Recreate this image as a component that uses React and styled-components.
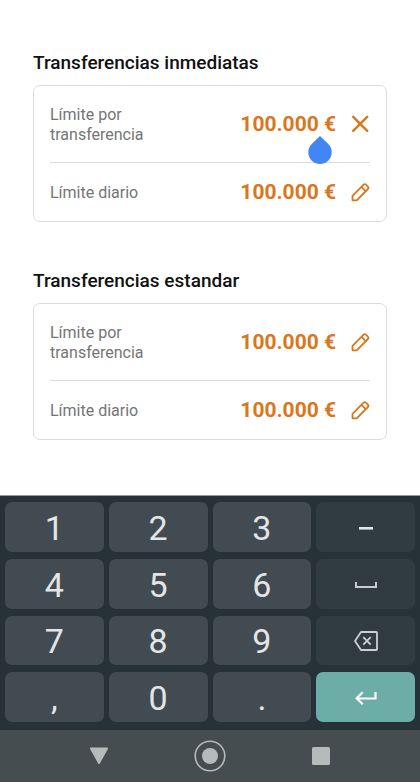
import React, { useState } from "react";
import styled, { createGlobalStyle } from "styled-components";

const sections = [
    {
        id: "inmediatas",
        title: "Transferencias inmediatas",
        limits: [
            { id: "inm-transferencia", label: "Límite por transferencia", value: "100.000 €", editing: true },
            { id: "inm-diario", label: "Límite diario", value: "100.000 €" },
        ],
    },
    {
        id: "estandar",
        title: "Transferencias estandar",
        limits: [
            { id: "est-transferencia", label: "Límite por transferencia", value: "100.000 €" },
            { id: "est-diario", label: "Límite diario", value: "100.000 €" },
        ],
    },
];

const CloseIcon = () => (
    <svg width="20" height="20" viewBox="0 0 20 20" fill="none" stroke="currentColor" strokeWidth="2.4" strokeLinecap="round">
        <path d="M3.2 2.8 17.2 16.8M17.2 2.8 3.2 16.8" />
    </svg>
);

const PencilIcon = () => (
    <svg width="20" height="20" viewBox="0 0 20 20" fill="none" stroke="currentColor" strokeWidth="1.8" strokeLinejoin="round">
        <path d="M2.500 18.300V13.900L13.600 2.700q1.200-1.100 2.400 0L17.900 4.600q1.100 1.200 0 2.400L6.700 18.300Z" />
        <path d="M11.400 4.900 15.700 9.200" />
    </svg>
);

const SpaceIcon = () => (
    <svg width="22" height="8" viewBox="0 0 22 8" fill="none" stroke="#c8cccd" strokeWidth="2">
        <path d="M1 1v5h20V1" />
    </svg>
);

const BackspaceIcon = () => (
    <svg width="24" height="20" viewBox="0 0 24 20" fill="none" stroke="#cdd0d1" strokeWidth="1.8" strokeLinejoin="round">
        <path d="M7 1h15.200q.8 0 .8.8v16.400q0 .8-.8.8H7L1 10Z" />
        <path d="m9.300 6.200 7.400 7.400M16.700 6.200l-7.400 7.400" />
    </svg>
);

const EnterIcon = () => (
    <svg width="22" height="14" viewBox="0 0 22 14" fill="none" stroke="#ffffff" strokeWidth="2.200">
        <path d="M20.500 1v6.500H2" />
        <path d="M7.700 1.200 1.700 7.300l6 5.900" />
    </svg>
);

const DashIcon = () => (
    <svg width="14" height="4" viewBox="0 0 14 4">
        <rect y="1" width="14" height="2.600" fill="#e3e5e6" />
    </svg>
);

const keys = [
    { name: "1" },
    { name: "2" },
    { name: "3" },
    { name: "Guion", icon: <DashIcon />, variant: "side" },
    { name: "4" },
    { name: "5" },
    { name: "6" },
    { name: "Espacio", icon: <SpaceIcon />, variant: "side" },
    { name: "7" },
    { name: "8" },
    { name: "9" },
    { name: "Borrar", icon: <BackspaceIcon />, variant: "side" },
    { name: "," },
    { name: "0" },
    { name: "." },
    { name: "Intro", icon: <EnterIcon />, variant: "enter" },
];

const LimitRow = ({ limit }) => {
    const [value, setValue] = useState(limit.value);

    return (
        <Row>
            <Label htmlFor={limit.id}>{limit.label}</Label>
            <Field>
                <Amount
                    id={limit.id}
                    value={value}
                    readOnly={!limit.editing}
                    inputMode="numeric"
                    onChange={(e) => setValue(e.target.value)}
                />
                {limit.editing ? (
                    <CaretHandle width="24" height="28" viewBox="0 0 24 28" aria-hidden="true">
                        <path d="M12 0 20.300 8.100A11.700 11.700 0 1 1 3.700 8.100Z" fill="#4285f4" />
                    </CaretHandle>
                ) : null}
            </Field>
            <IconButton type="button" aria-label={limit.editing ? "Cancelar" : "Editar"}>
                {limit.editing ? <CloseIcon /> : <PencilIcon />}
            </IconButton>
        </Row>
    );
};

const App = () => (
    <Screen>
        <GlobalStyle />
        <Content>
            {sections.map((section) => (
                <section key={section.id}>
                    <Title>{section.title}</Title>
                    <Card>
                        {section.limits.map((limit) => (
                            <LimitRow key={limit.id} limit={limit} />
                        ))}
                    </Card>
                </section>
            ))}
        </Content>
        <Keyboard>
            {keys.map((key) => (
                <Key key={key.name} type="button" $variant={key.variant} aria-label={key.icon ? key.name : undefined}>
                    {key.icon || key.name}
                </Key>
            ))}
        </Keyboard>
        <NavBar>
            <NavButton type="button" aria-label="Atrás">
                <svg width="20" height="18" viewBox="0 0 20 18">
                    <path d="M2 1.500h16L10 16Z" fill="#b5babb" stroke="#b5babb" strokeWidth="2" strokeLinejoin="round" />
                </svg>
            </NavButton>
            <NavButton type="button" aria-label="Inicio">
                <svg width="32" height="32" viewBox="0 0 32 32">
                    <circle cx="16" cy="16" r="14.800" fill="none" stroke="#b5babb" strokeWidth="1.600" />
                    <circle cx="16" cy="16" r="8" fill="#b5babb" />
                </svg>
            </NavButton>
            <NavButton type="button" aria-label="Recientes">
                <svg width="18" height="18" viewBox="0 0 18 18">
                    <rect width="18" height="18" rx="1.500" fill="#b5babb" />
                </svg>
            </NavButton>
        </NavBar>
    </Screen>
);

const GlobalStyle = createGlobalStyle`
    * {
        box-sizing: border-box;
    }
    body {
        margin: 0;
        background-color: #ffffff;
        font-family: Roboto, "Liberation Sans", sans-serif;
    }
    button, input {
        margin: 0;
        padding: 0;
        border: none;
        font-family: inherit;
    }
    svg {
        display: block;
    }
`;

const Screen = styled.div`
    display: flex;
    flex-direction: column;
    min-height: 100vh;
`;

const Content = styled.main`
    display: flex;
    flex-direction: column;
    flex: 1;
    gap: 47px;
    padding: 51px 33px 40px;
`;

const Title = styled.h2`
    margin: 0 0 10px;
    color: #111111;
    font-size: 19px;
    font-weight: 500;
    line-height: 24px;
`;

const Card = styled.div`
    padding: 0 16px;
    border: 1px solid #dcdcdc;
    border-radius: 7px;
`;

const Row = styled.div`
    display: flex;
    align-items: center;
    padding: 17px 0;
    & + & {
        border-top: 1px solid #d9d9d9;
    }
`;

const Label = styled.label`
    flex: 1;
    padding: 2px 60px 0 0;
    color: #757575;
    font-size: 16px;
    line-height: 20px;
`;

const Field = styled.div`
    position: relative;
`;

const Amount = styled.input`
    display: block;
    width: 110px;
    height: 24px;
    background: none;
    color: #d9771c;
    font-size: 21px;
    font-weight: 700;
    line-height: 24px;
    text-align: right;
    outline: none;
`;

const CaretHandle = styled.svg`
    position: absolute;
    top: 100%;
    right: 4px;
`;

const IconButton = styled.button`
    margin-left: 14px;
    background: none;
    color: #d9771c;
    cursor: pointer;
`;

const Keyboard = styled.div`
    display: grid;
    grid-template-columns: repeat(4, 1fr);
    grid-template-rows: repeat(4, 1fr);
    gap: 7px 5px;
    height: 235px;
    padding: 6px 5px 8px;
    border-top: 1px solid #8f9b9c;
    background-color: #263238;
`;

const keyColors = {
    side: "#313c42",
    enter: "#6dada7",
};

const Key = styled.button`
    display: flex;
    align-items: center;
    justify-content: center;
    padding-top: 2px;
    border-radius: 7px;
    background-color: ${({ $variant }) => keyColors[$variant] || "#424b51"};
    color: #e3e5e6;
    font-size: 34px;
    line-height: 40px;
    cursor: pointer;
`;

const NavBar = styled.nav`
    display: grid;
    grid-template-columns: repeat(3, 1fr);
    height: 52px;
    padding: 0 44px 0 43px;
    background-color: #454d51;
`;

const NavButton = styled.button`
    display: flex;
    align-items: center;
    justify-content: center;
    background: none;
    cursor: pointer;
`;

export default App;
